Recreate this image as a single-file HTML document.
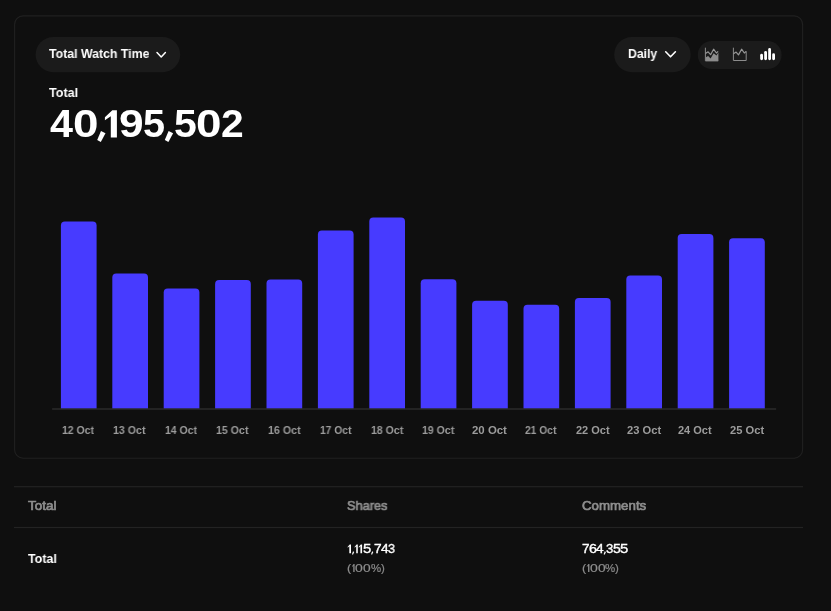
<!DOCTYPE html>
<html><head><meta charset="utf-8">
<style>
html,body{margin:0;padding:0;background:#0f0f0f;}
body{width:831px;height:611px;position:relative;overflow:hidden;font-family:"Liberation Sans",sans-serif;color:#fff;}
.t{position:absolute;white-space:nowrap;line-height:1;transform-origin:0 0;will-change:transform;}

svg{position:absolute;overflow:visible;}
</style></head><body>
<svg style="left:0;top:0" width="831" height="611"><rect x="14.6" y="15.9" width="788" height="442.3" rx="8.5" fill="none" stroke="#212121" stroke-width="1.1"/><rect x="14" y="486.1" width="789" height="1.2" fill="#232323"/><rect x="14" y="526.9" width="789" height="1.2" fill="#232323"/></svg>
<svg style="left:0;top:0" width="831" height="100"><rect x="35.6" y="37.1" width="144.6" height="35.1" rx="17.55" fill="#1b1b1b"/><rect x="614.2" y="37.1" width="76.5" height="35.1" rx="17.55" fill="#1b1b1b"/></svg>
<svg style="left:0;top:0" width="831" height="100" viewBox="0 0 831 100">
<path d="M157 52.5 L161.2 56.9 L165.4 52.5" fill="none" stroke="#fff" stroke-width="1.5" stroke-linecap="round" stroke-linejoin="round"/>
</svg>

<svg style="left:0;top:0" width="831" height="100" viewBox="0 0 831 100">
<path d="M665.7 51.8 L670.55 56.8 L675.4 51.8" fill="none" stroke="#fff" stroke-width="1.6" stroke-linecap="round" stroke-linejoin="round"/>
</svg>
<svg style="left:0;top:0" width="831" height="100"><rect x="697.8" y="41" width="83.8" height="28" rx="14" fill="#1b1b1b"/></svg>
<svg style="left:698px;top:41px" width="84" height="28" viewBox="0 0 84 28">
<path d="M7.4 6.7 V19.9 H20.2" fill="none" stroke="#8c8c8c" stroke-width="1"/>
<path d="M7.5 12.6 L10.1 10.8 L12.6 13.7 L15.6 8.2 L18.4 12 L20.1 10.4" fill="none" stroke="#969696" stroke-width="1.2" stroke-linejoin="round"/>
<path d="M7.9 16.3 L10.1 15.1 L12.6 17.4 L15.6 12.3 L18.5 14.6 L20.4 11.6 V19.9 H7.9 Z" fill="#8c8c8c"/>
<path d="M35.4 6.7 V19.5 H48.2 V10.4" fill="none" stroke="#8c8c8c" stroke-width="1"/>
<path d="M35.5 12.8 L38.1 11.1 L40.5 13.9 L43.6 8.2 L46.3 12 L48.2 10.4" fill="none" stroke="#969696" stroke-width="1.2" stroke-linejoin="round"/>
<rect x="62.2" y="12.8" width="2.8" height="6.4" rx="1.4" fill="#fff"/>
<rect x="66.2" y="9.9" width="2.8" height="9.3" rx="1.4" fill="#fff"/>
<rect x="70.2" y="7.1" width="2.8" height="12.1" rx="1.4" fill="#fff"/>
<rect x="74.2" y="12.3" width="2.8" height="6.9" rx="1.4" fill="#fff"/>
</svg>
<svg style="left:0;top:0" width="831" height="611" viewBox="0 0 831 611" fill="#473bff">
<path d="M60.9 408.8 V225.4 Q60.9 221.4 64.9 221.4 H92.6 Q96.6 221.4 96.6 225.4 V408.8 Z"/>
<path d="M112.3 408.8 V277.6 Q112.3 273.6 116.3 273.6 H144.0 Q148.0 273.6 148.0 277.6 V408.8 Z"/>
<path d="M163.7 408.8 V292.5 Q163.7 288.5 167.7 288.5 H195.4 Q199.4 288.5 199.4 292.5 V408.8 Z"/>
<path d="M215.1 408.8 V284.0 Q215.1 280.0 219.1 280.0 H246.8 Q250.8 280.0 250.8 284.0 V408.8 Z"/>
<path d="M266.5 408.8 V283.4 Q266.5 279.4 270.5 279.4 H298.2 Q302.2 279.4 302.2 283.4 V408.8 Z"/>
<path d="M317.9 408.8 V234.4 Q317.9 230.4 321.9 230.4 H349.6 Q353.6 230.4 353.6 234.4 V408.8 Z"/>
<path d="M369.3 408.8 V221.4 Q369.3 217.4 373.3 217.4 H401.0 Q405.0 217.4 405.0 221.4 V408.8 Z"/>
<path d="M420.7 408.8 V283.3 Q420.7 279.3 424.7 279.3 H452.4 Q456.4 279.3 456.4 283.3 V408.8 Z"/>
<path d="M472.1 408.8 V304.7 Q472.1 300.7 476.1 300.7 H503.8 Q507.8 300.7 507.8 304.7 V408.8 Z"/>
<path d="M523.5 408.8 V308.7 Q523.5 304.7 527.5 304.7 H555.2 Q559.2 304.7 559.2 308.7 V408.8 Z"/>
<path d="M574.9 408.8 V302.1 Q574.9 298.1 578.9 298.1 H606.6 Q610.6 298.1 610.6 302.1 V408.8 Z"/>
<path d="M626.3 408.8 V279.4 Q626.3 275.4 630.3 275.4 H658.0 Q662.0 275.4 662.0 279.4 V408.8 Z"/>
<path d="M677.7 408.8 V238.0 Q677.7 234.0 681.7 234.0 H709.4 Q713.4 234.0 713.4 238.0 V408.8 Z"/>
<path d="M729.1 408.8 V242.3 Q729.1 238.3 733.1 238.3 H760.8 Q764.8 238.3 764.8 242.3 V408.8 Z"/>
</svg>
<svg style="left:0;top:0" width="831" height="611"><rect x="52.1" y="408.35" width="724" height="1.3" fill="#2e2e2e"/></svg>
<div class="t" style="left:62.32px;top:424px;font-size:11.0px;line-height:12px;font-weight:bold;color:#9c9c9c;transform:scaleX(0.9517);">12 Oct</div>
<div class="t" style="left:113.46px;top:424px;font-size:11.0px;line-height:12px;font-weight:bold;color:#9c9c9c;transform:scaleX(0.9669);">13 Oct</div>
<div class="t" style="left:165.12px;top:424px;font-size:11.0px;line-height:12px;font-weight:bold;color:#9c9c9c;transform:scaleX(0.9517);">14 Oct</div>
<div class="t" style="left:216.31px;top:424px;font-size:11.0px;line-height:12px;font-weight:bold;color:#9c9c9c;transform:scaleX(0.9638);">15 Oct</div>
<div class="t" style="left:267.56px;top:424px;font-size:11.0px;line-height:12px;font-weight:bold;color:#9c9c9c;transform:scaleX(0.9729);">16 Oct</div>
<div class="t" style="left:319.58px;top:424px;font-size:11.0px;line-height:12px;font-weight:bold;color:#9c9c9c;transform:scaleX(0.9365);">17 Oct</div>
<div class="t" style="left:370.62px;top:424px;font-size:11.0px;line-height:12px;font-weight:bold;color:#9c9c9c;transform:scaleX(0.9577);">18 Oct</div>
<div class="t" style="left:422.02px;top:424px;font-size:11.0px;line-height:12px;font-weight:bold;color:#9c9c9c;transform:scaleX(0.9577);">19 Oct</div>
<div class="t" style="left:472.21px;top:424px;font-size:11.0px;line-height:12px;font-weight:bold;color:#9c9c9c;transform:scaleX(1.0385);">20 Oct</div>
<div class="t" style="left:525.39px;top:424px;font-size:11.0px;line-height:12px;font-weight:bold;color:#9c9c9c;transform:scaleX(0.9332);">21 Oct</div>
<div class="t" style="left:575.67px;top:424px;font-size:11.0px;line-height:12px;font-weight:bold;color:#9c9c9c;transform:scaleX(0.9994);">22 Oct</div>
<div class="t" style="left:626.82px;top:424px;font-size:11.0px;line-height:12px;font-weight:bold;color:#9c9c9c;transform:scaleX(1.0144);">23 Oct</div>
<div class="t" style="left:678.47px;top:424px;font-size:11.0px;line-height:12px;font-weight:bold;color:#9c9c9c;transform:scaleX(0.9994);">24 Oct</div>
<div class="t" style="left:729.62px;top:424px;font-size:11.0px;line-height:12px;font-weight:bold;color:#9c9c9c;transform:scaleX(1.0144);">25 Oct</div>
<div class="t" style="left:49.28px;top:46px;font-size:13.0px;line-height:15px;font-weight:bold;color:#fff;transform:scaleX(0.9478);">Total Watch Time</div>
<div class="t" style="left:627.99px;top:46px;font-size:13.0px;line-height:15px;font-weight:bold;color:#fff;transform:scaleX(0.9407);">Daily</div>
<div class="t" style="left:49.17px;top:85px;font-size:13.5px;line-height:15px;font-weight:bold;color:#fff;transform:scaleX(0.9325);">Total</div>
<div class="t" style="left:49.59px;top:101px;font-size:39.5px;line-height:44px;font-weight:bold;color:#fff;transform:scaleX(1.0455);">4</div>
<div class="t" style="left:72.97px;top:101px;font-size:39.5px;line-height:44px;font-weight:bold;color:#fff;transform:scaleX(1.1603);">0</div>
<div class="t" style="left:118.97px;top:101px;font-size:39.5px;line-height:44px;font-weight:bold;color:#fff;transform:scaleX(1.1212);">9</div>
<div class="t" style="left:143.01px;top:101px;font-size:39.5px;line-height:44px;font-weight:bold;color:#fff;transform:scaleX(1.0025);">5</div>
<div class="t" style="left:173.77px;top:101px;font-size:39.5px;line-height:44px;font-weight:bold;color:#fff;transform:scaleX(1.0380);">5</div>
<div class="t" style="left:196.17px;top:101px;font-size:39.5px;line-height:44px;font-weight:bold;color:#fff;transform:scaleX(1.1603);">0</div>
<div class="t" style="left:220.78px;top:101px;font-size:39.5px;line-height:44px;font-weight:bold;color:#fff;transform:scaleX(1.0333);">2</div>
<div class="t" style="left:28.03px;top:498px;font-size:13.0px;line-height:15px;font-weight:normal;color:#8e8e8e;transform:scaleX(1.0345);-webkit-text-stroke:0.7px #8e8e8e;">Total</div>
<div class="t" style="left:347.26px;top:498px;font-size:13.0px;line-height:15px;font-weight:normal;color:#8e8e8e;transform:scaleX(0.9790);-webkit-text-stroke:0.7px #8e8e8e;">Shares</div>
<div class="t" style="left:582.24px;top:498px;font-size:13.0px;line-height:15px;font-weight:normal;color:#8e8e8e;transform:scaleX(1.0219);-webkit-text-stroke:0.7px #8e8e8e;">Comments</div>
<div class="t" style="left:27.98px;top:551px;font-size:13.5px;line-height:15px;font-weight:bold;color:#fff;transform:scaleX(0.9226);">Total</div>
<div class="t" style="left:363.00px;top:541px;font-size:13.0px;line-height:15px;font-weight:normal;color:#fff;transform:scaleX(1.1457);-webkit-text-stroke:0.35px #fff;">5</div>
<div class="t" style="left:373.52px;top:541px;font-size:13.0px;line-height:15px;font-weight:normal;color:#fff;transform:scaleX(1.0535);-webkit-text-stroke:0.35px #fff;">7</div>
<div class="t" style="left:380.63px;top:541px;font-size:13.0px;line-height:15px;font-weight:normal;color:#fff;transform:scaleX(1.0558);-webkit-text-stroke:0.35px #fff;">4</div>
<div class="t" style="left:387.70px;top:541px;font-size:13.0px;line-height:15px;font-weight:normal;color:#fff;transform:scaleX(0.9656);-webkit-text-stroke:0.35px #fff;">3</div>
<div class="t" style="left:581.73px;top:541px;font-size:13.0px;line-height:15px;font-weight:normal;color:#fff;transform:scaleX(1.0368);-webkit-text-stroke:0.35px #fff;">7</div>
<div class="t" style="left:588.68px;top:541px;font-size:13.0px;line-height:15px;font-weight:normal;color:#fff;transform:scaleX(1.1037);-webkit-text-stroke:0.35px #fff;">6</div>
<div class="t" style="left:596.13px;top:541px;font-size:13.0px;line-height:15px;font-weight:normal;color:#fff;transform:scaleX(1.0558);-webkit-text-stroke:0.35px #fff;">4</div>
<div class="t" style="left:606.17px;top:541px;font-size:13.0px;line-height:15px;font-weight:normal;color:#fff;transform:scaleX(1.0147);-webkit-text-stroke:0.35px #fff;">3</div>
<div class="t" style="left:613.14px;top:541px;font-size:13.0px;line-height:15px;font-weight:normal;color:#fff;transform:scaleX(1.0802);-webkit-text-stroke:0.35px #fff;">5</div>
<div class="t" style="left:620.40px;top:541px;font-size:13.0px;line-height:15px;font-weight:normal;color:#fff;transform:scaleX(1.1457);-webkit-text-stroke:0.35px #fff;">5</div>
<div class="t" style="left:581.94px;top:562px;font-size:11.5px;line-height:12px;font-weight:normal;color:#8e8e8e;transform:scaleX(1.1037);-webkit-text-stroke:0.2px #8e8e8e;">(</div>
<div class="t" style="left:590.24px;top:562px;font-size:11.5px;line-height:12px;font-weight:normal;color:#8e8e8e;transform:scaleX(1.2138);-webkit-text-stroke:0.2px #8e8e8e;">0</div>
<div class="t" style="left:598.05px;top:562px;font-size:11.5px;line-height:12px;font-weight:normal;color:#8e8e8e;transform:scaleX(1.1957);-webkit-text-stroke:0.2px #8e8e8e;">0</div>
<div class="t" style="left:605.45px;top:562px;font-size:11.5px;line-height:12px;font-weight:normal;color:#8e8e8e;transform:scaleX(0.9877);-webkit-text-stroke:0.2px #8e8e8e;">%</div>
<div class="t" style="left:615.39px;top:562px;font-size:11.5px;line-height:12px;font-weight:normal;color:#8e8e8e;transform:scaleX(0.9699);-webkit-text-stroke:0.2px #8e8e8e;">)</div>
<div class="t" style="left:347.14px;top:562px;font-size:11.5px;line-height:12px;font-weight:normal;color:#8e8e8e;transform:scaleX(1.1037);-webkit-text-stroke:0.2px #8e8e8e;">(</div>
<div class="t" style="left:355.44px;top:562px;font-size:11.5px;line-height:12px;font-weight:normal;color:#8e8e8e;transform:scaleX(1.2138);-webkit-text-stroke:0.2px #8e8e8e;">0</div>
<div class="t" style="left:363.25px;top:562px;font-size:11.5px;line-height:12px;font-weight:normal;color:#8e8e8e;transform:scaleX(1.1957);-webkit-text-stroke:0.2px #8e8e8e;">0</div>
<div class="t" style="left:370.65px;top:562px;font-size:11.5px;line-height:12px;font-weight:normal;color:#8e8e8e;transform:scaleX(0.9877);-webkit-text-stroke:0.2px #8e8e8e;">%</div>
<div class="t" style="left:380.59px;top:562px;font-size:11.5px;line-height:12px;font-weight:normal;color:#8e8e8e;transform:scaleX(0.9699);-webkit-text-stroke:0.2px #8e8e8e;">)</div>
<svg style="left:0;top:0" width="831" height="200" fill="#fff">
<path d="M112.3 110.35 H116.9 V137.4 H110.8 V116.2 L104.9 120.3 V117.3 Z"/>
<path d="M101 131.1 L105.5 133.2 L100.8 141.9 L97.2 140.1 Z"/>
<path d="M168.6 131.1 L173.1 133.2 L168.4 141.9 L164.8 140.1 Z"/>
</svg>
<svg style="left:0;top:0" width="831" height="611">
<path fill="#fff" d="M349.74 544.40 H351.00 V553.30 H349.32 V546.32 L347.70 547.68 V546.69 Z"/>
<path fill="#fff" d="M353.01 551.23 L354.20 551.92 L352.95 554.78 L352.00 554.19 Z"/>
<path fill="#fff" d="M356.61 544.40 H357.80 V553.30 H356.22 V546.32 L354.70 547.68 V546.69 Z"/>
<path fill="#fff" d="M360.84 544.40 H362.10 V553.30 H360.42 V546.32 L358.80 547.68 V546.69 Z"/>
<path fill="#fff" d="M372.11 551.23 L373.30 551.92 L372.05 554.78 L371.10 554.19 Z"/>
<path fill="#fff" d="M604.70 551.23 L606.00 551.92 L604.64 554.78 L603.60 554.19 Z"/>
<path fill="#8e8e8e" d="M588.40 564.10 H589.40 V572.00 H588.07 V565.81 L586.80 567.01 V566.13 Z"/>
<path fill="#8e8e8e" d="M353.60 564.10 H354.60 V572.00 H353.27 V565.81 L352.00 567.01 V566.13 Z"/>
</svg>
</body></html>
